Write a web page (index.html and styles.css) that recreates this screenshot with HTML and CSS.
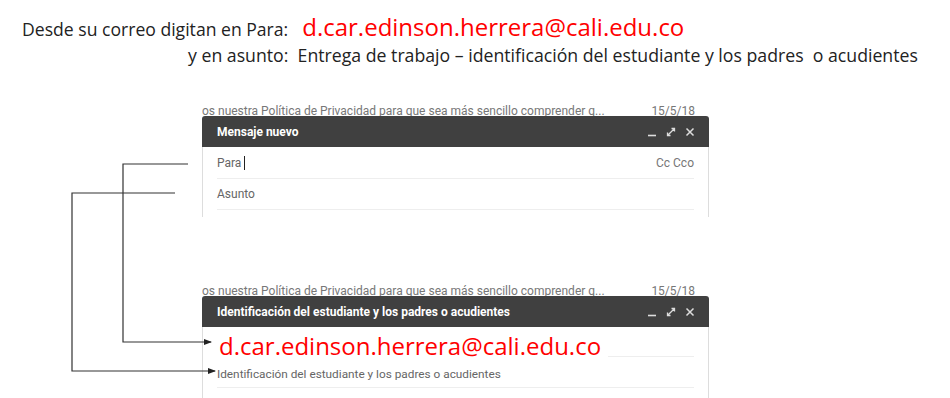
FILE: index.html
```html
<!DOCTYPE html>
<html>

<head>
    <meta charset="UTF-8">
    <title>Entrega de trabajo</title>
    <link rel="stylesheet" href="styles.css">
</head>

<body>
    <div class="page">
        <div class="intro">
            <p class="intro-line first">Desde su correo digitan en Para:<span class="mail">d.car.edinson.herrera@cali.edu.co</span></p>
            <p class="intro-line second">y en asunto:&nbsp; Entrega de trabajo – identificación del estudiante y los padres&nbsp; o acudientes</p>
        </div>

        <div class="stage">
            <!-- ventana 1 -->
            <div class="compose compose-top">
                <div class="behind">
                    <span>os nuestra Política de Privacidad para que sea más sencillo comprender q...</span>
                    <span class="date">15/5/18</span>
                </div>
                <div class="compose-head">
                    <span class="compose-title">Mensaje nuevo</span>
                    <span class="compose-icons">
                        <svg width="10" height="10" viewBox="0 0 10 10"><path d="M1 8.5h8" stroke="#ddd" stroke-width="1.6"/></svg>
                        <svg width="10" height="10" viewBox="0 0 10 10"><path d="M1.5 8.5l7-7M5.5 1.5h3v3M1.5 5.5v3h3" stroke="#ddd" stroke-width="1.3" fill="none"/></svg>
                        <svg width="10" height="10" viewBox="0 0 10 10"><path d="M1.5 1.5l7 7M8.5 1.5l-7 7" stroke="#ddd" stroke-width="1.5"/></svg>
                    </span>
                </div>
                <div class="compose-body">
                    <div class="field field-to">
                        <span>Para <i class="caret"></i></span>
                        <span class="cc">Cc Cco</span>
                    </div>
                    <div class="field">
                        <span>Asunto</span>
                    </div>
                </div>
            </div>

            <!-- ventana 2 -->
            <div class="compose compose-bottom">
                <div class="behind">
                    <span>os nuestra Política de Privacidad para que sea más sencillo comprender q...</span>
                    <span class="date">15/5/18</span>
                </div>
                <div class="compose-head">
                    <span class="compose-title">Identificación del estudiante y los padres o acudientes</span>
                    <span class="compose-icons">
                        <svg width="10" height="10" viewBox="0 0 10 10"><path d="M1 8.5h8" stroke="#ddd" stroke-width="1.6"/></svg>
                        <svg width="10" height="10" viewBox="0 0 10 10"><path d="M1.5 8.5l7-7M5.5 1.5h3v3M1.5 5.5v3h3" stroke="#ddd" stroke-width="1.3" fill="none"/></svg>
                        <svg width="10" height="10" viewBox="0 0 10 10"><path d="M1.5 1.5l7 7M8.5 1.5l-7 7" stroke="#ddd" stroke-width="1.5"/></svg>
                    </span>
                </div>
                <div class="compose-body">
                    <div class="field field-mail">
                        <span class="mail-big">d.car.edinson.herrera@cali.edu.co</span>
                        <span class="mail-line"></span>
                    </div>
                    <div class="field field-subject">
                        <span>Identificación del estudiante y los padres o acudientes</span>
                    </div>
                </div>
            </div>

            <!-- flechas -->
            <svg class="links" width="950" height="398" viewBox="0 0 950 398">
                <defs>
                    <marker id="head" markerWidth="8" markerHeight="6" refX="7" refY="3" orient="auto" markerUnits="userSpaceOnUse">
                        <path d="M0 0L8 3L0 6z" fill="#222"/>
                    </marker>
                </defs>
                <path d="M188 164H123V342H211" stroke="#333" stroke-width="1.2" fill="none" marker-end="url(#head)"/>
                <path d="M175 193H72V371H215" stroke="#333" stroke-width="1.2" fill="none" marker-end="url(#head)"/>
            </svg>
        </div>
    </div>
</body>

</html>
```

FILE: styles.css
```css
* {
    margin: 0;
    padding: 0;
}

body {
    width: 950px;
    height: 398px;
    overflow: hidden;
    background: #fff;
    font-family: "Open Sans", "Liberation Sans", sans-serif;
}

.page {
    position: relative;
    height: 398px;
}

.intro {
    padding-top: 14px;
    color: #222;
}

.intro-line {
    font-size: 17.6px;
    white-space: nowrap;
}

.intro-line.first {
    padding-left: 22px;
    line-height: 30px;
}

.intro-line.second {
    padding-left: 188px;
    line-height: 22px;
    font-size: 17.7px;
}

.mail {
    color: #ff0000;
    font-size: 24px;
    line-height: 1;
    margin-left: 14px;
}

.stage {
    padding-left: 202px;
    padding-top: 39px;
    display: flex;
    flex-direction: column;
    gap: 68px;
}

.compose {
    width: 507px;
    font-family: Roboto, "Liberation Sans", sans-serif;
}

.behind {
    height: 11px;
    overflow: hidden;
    display: flex;
    justify-content: space-between;
    padding: 0 14px 0 0;
    font-size: 12px;
    line-height: 12px;
    color: #777;
    text-decoration: underline;
}

.behind .date {
    text-decoration: none;
}

.compose-head {
    height: 31px;
    background: #404040;
    border-radius: 3px 3px 0 0;
    display: flex;
    align-items: center;
    justify-content: space-between;
    padding: 0 14px 0 15px;
}

.compose-title {
    color: #fff;
    font-size: 12px;
    font-weight: bold;
}

.compose-icons {
    display: flex;
    gap: 9px;
}

.compose-icons svg {
    display: block;
}

.compose-body {
    height: 70px;
    border-left: 1px solid #ddd;
    border-right: 1px solid #ddd;
    padding: 0 14px 0 14px;
}

.field {
    height: 30px;
    border-bottom: 1px solid #eee;
    display: flex;
    align-items: center;
    justify-content: space-between;
    font-size: 12px;
    color: #666;
}

.field-to {
    height: 31px;
}

.caret {
    display: inline-block;
    width: 1px;
    height: 14px;
    background: #222;
    vertical-align: -3px;
}

.cc {
    color: #777;
}

.compose-bottom .compose-body {
    height: 71px;
}

.field-mail {
    border-bottom: 0 none;
    height: 34px;
    align-items: flex-end;
}

.mail-big {
    color: #ff0000;
    font-size: 24px;
    font-family: "Open Sans", "Liberation Sans", sans-serif;
    line-height: 30px;
    margin-left: 2px;
}

.mail-line {
    width: 86px;
    height: 1px;
    background: #eee;
    margin-bottom: 4px;
}

.field-subject {
    height: 26px;
    font-size: 11.8px;
}

.links {
    position: absolute;
    left: 0;
    top: 0;
    pointer-events: none;
}
```
